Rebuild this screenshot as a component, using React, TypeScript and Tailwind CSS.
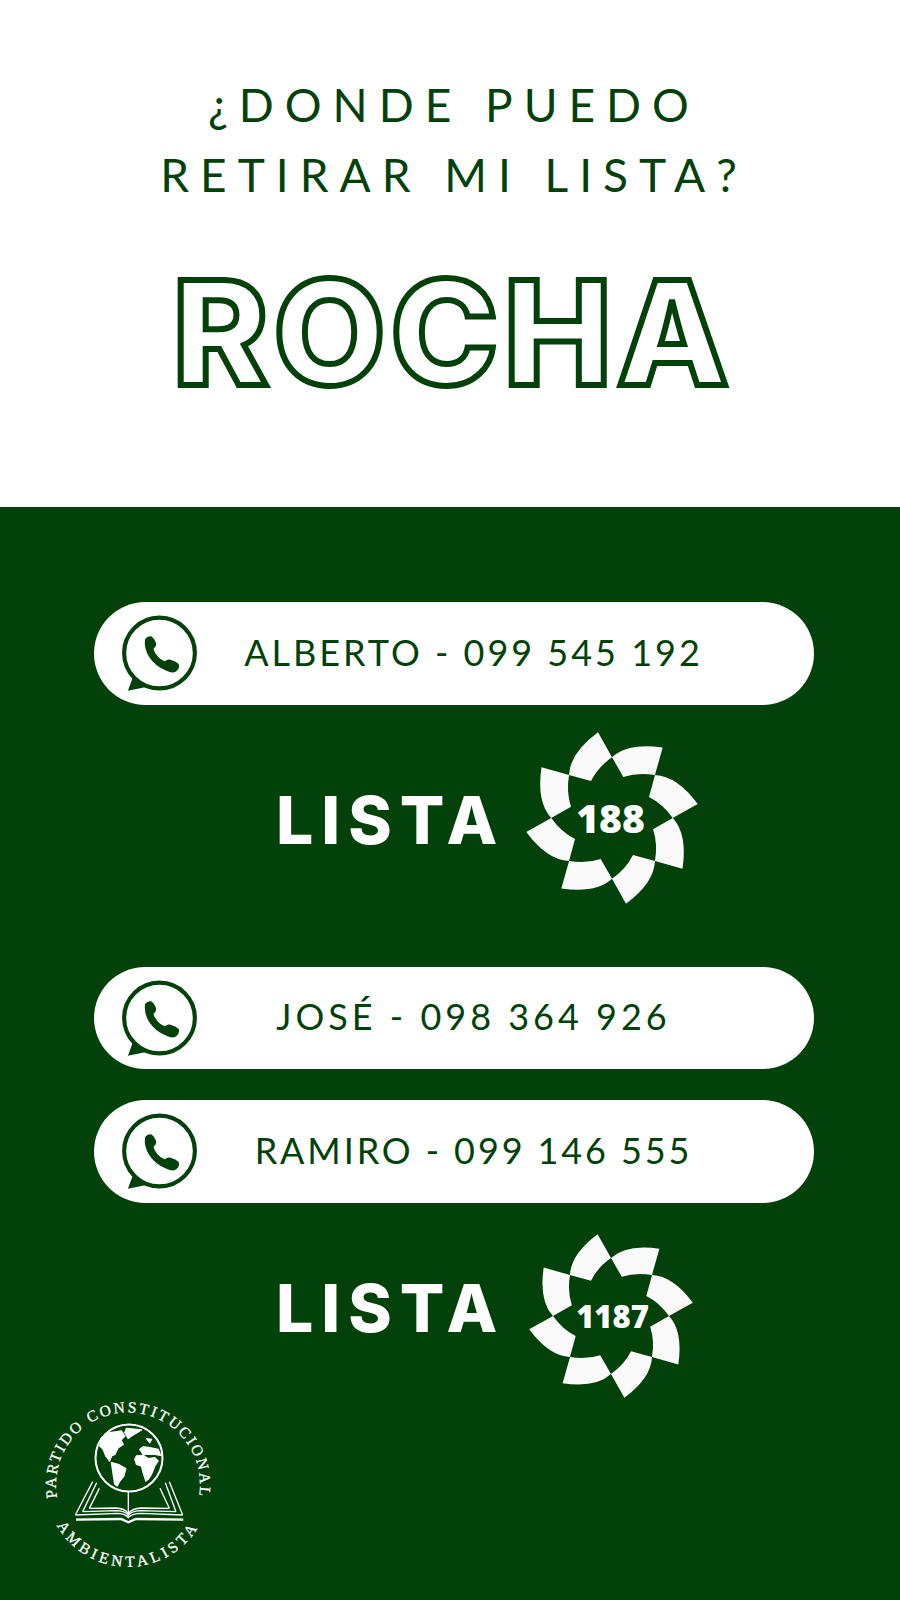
const GREEN = '#02420a'

function WhatsApp() {
  return (
    <svg viewBox="15 10 230 235" className="w-[79px] h-[81px] shrink-0" fill="none">
      <circle cx="130" cy="126" r="103" stroke={GREEN} strokeWidth="12" />
      <path d="M52 198 L38 236 L88 226 Z" fill={GREEN} />
      <path d="M88 85 Q97 74 107 78 Q116 84 120 97 Q122 106 113 113 Q112 120 124 135 Q135 148 146 150 Q153 143 162 146 Q178 150 186 158 Q190 170 178 180 Q168 186 150 178 Q118 166 100 138 Q84 112 88 85Z" fill={GREEN} />
    </svg>
  )
}

function Pill({ text, className, tracking }: { text: string; className?: string; tracking: string }) {
  return (
    <div className={`ml-[94px] w-[720px] rounded-full bg-white flex items-center ${className ?? ''}`}>
      <div className="ml-[26px]">
        <WhatsApp />
      </div>
      <p className={`flex-1 pr-[66px] pb-[4px] text-center whitespace-nowrap font-['Lato',sans-serif] font-normal text-[36px] leading-none text-[#02420a] ${tracking}`}>
        {text}
      </p>
    </div>
  )
}

function Flower({ number, numberSize, className }: { number: string; numberSize: string; className?: string }) {
  const angles = [0, 45, 90, 135, 180, 225, 270, 315]
  return (
    <div className={`relative flex items-center justify-center ${className ?? ''}`}>
      <svg viewBox="-88 -88 176 176" className="absolute inset-0 w-full h-full" fill="#fafafa">
        {angles.map((a) => (
          <path
            key={a}
            transform={`rotate(${a})`}
            d="M-43 -43 Q-42 -65 -14 -85.7 L0 -60.7 Q-14 -51 -21 -37 Z"
          />
        ))}
      </svg>
      <span className={`relative font-['Open_Sans',sans-serif] font-extrabold leading-none text-white ${numberSize}`}>
        {number}
      </span>
    </div>
  )
}

function ListaRow({ textClass, children, className }: { textClass: string; children: React.ReactNode; className?: string }) {
  return (
    <div className={`flex items-center h-[176px] ${className ?? ''}`}>
      <p className={`ml-[276px] w-[248px] font-['Inter',sans-serif] font-extrabold text-[66px] leading-none tracking-[8px] text-white ${textClass}`}>
        LISTA
      </p>
      {children}
    </div>
  )
}

function PartyLogo() {
  return (
    <svg viewBox="0 0 200 180" className="w-[200px] h-[180px]" fill="none">
      <defs>
        <path id="arc-top" d="M43 141 A72 72 0 1 1 153 141" />
        <path id="arc-bottom" d="M21 123 A82 82 0 0 0 175 123" />
      </defs>
      <text fill="#fff" fontFamily="'Liberation Serif', serif" fontSize="15.5" letterSpacing="2.2" stroke="#fff" strokeWidth=".3" textAnchor="middle">
        <textPath href="#arc-top" startOffset="50%">PARTIDO CONSTITUCIONAL</textPath>
      </text>
      <text fill="#fff" fontFamily="'Liberation Serif', serif" fontSize="15.5" letterSpacing="3.8" stroke="#fff" strokeWidth=".3" textAnchor="middle">
        <textPath href="#arc-bottom" startOffset="50%">AMBIENTALISTA</textPath>
      </text>
      {/* globe */}
      <circle cx="99" cy="68" r="33.5" stroke="#fff" strokeWidth="2" />
      <g transform="translate(56.5 26) scale(.3333)" fill="#fff" stroke="#fff" strokeWidth="4" strokeLinejoin="round">
        <path d="M70 50 L105 45 L115 60 L103 72 L110 85 L95 95 L85 115 L75 120 L70 135 L58 120 L50 100 L40 90 L45 65 Z" />
        <path d="M120 37 L165 42 L135 60 L125 67 L115 50 Z" />
        <path d="M75 140 L95 145 L118 158 L112 180 L100 195 L92 210 L85 205 L80 175 Z" />
        <path d="M150 120 L170 118 L185 128 L205 125 L215 135 L205 150 L195 175 L185 190 L178 195 L170 170 L165 150 L150 145 L145 130 Z" />
        <path d="M160 100 L170 92 L190 95 L215 100 L222 118 L205 115 L170 115 Z" />
        <path d="M180 68 L195 70 L190 80 Z" />
      </g>
      {/* book */}
      <g transform="translate(36 90) scale(.3333)" stroke="#fff" strokeWidth="4">
        <path d="M187 35 V115" />
        <path d="M28 105 L80 5 M350 105 L310 5" />
        <path d="M50 95 L92 8 M330 95 L298 8" />
        <path d="M70 85 L100 25 M310 85 L282 25" />
        <path d="M28 105 L155 100 Q175 100 187 112 Q200 100 225 100 L350 105" />
        <path d="M50 95 L150 92 Q175 92 187 105 Q200 92 225 92 L330 95" />
        <path d="M70 85 L150 84 Q175 85 187 100 Q200 85 225 84 L310 85" />
        <path d="M30 119 L165 117 L187 127 L210 117 L352 119" strokeWidth="7" />
      </g>
    </svg>
  )
}

export default function App() {
  return (
    <div className="w-[900px] min-h-[1600px] bg-[#02420a]">
      <section className="h-[507px] bg-white flex flex-col items-center">
        <h1 className="mt-[70px] pl-[8px] text-center font-['Lato',sans-serif] font-normal text-[46px] leading-[70px] tracking-[11px] text-[#02420a] whitespace-nowrap">
          ¿DONDE PUEDO
          <br />
          RETIRAR MI LISTA?
        </h1>
        <p className="mt-[53px] pl-[6px] font-['Inter',sans-serif] font-extrabold text-[145px] leading-[140px] tracking-[5px] text-white [-webkit-text-stroke:6px_#02420a] whitespace-nowrap">
          ROCHA
        </p>
      </section>

      <section className="pt-[95px]">
        <Pill text="ALBERTO - 099 545 192" tracking="tracking-[3px]" className="h-[103px]" />
        <ListaRow textClass="pt-[4px]" className="mt-[25px]">
          <Flower number="188" numberSize="text-[39px] pb-[2px] pr-[3px]" className="w-[176px] h-[176px]" />
        </ListaRow>
        <Pill text="JOSÉ - 098 364 926" tracking="tracking-[4px]" className="h-[102px] mt-[61px]" />
        <Pill text="RAMIRO - 099 146 555" tracking="tracking-[2.9px]" className="h-[103px] mt-[31px]" />
        <ListaRow textClass="pb-[16px]" className="mt-[25px]">
          <Flower number="1187" numberSize="text-[31px] pl-[3px]" className="w-[168px] h-[168px] ml-[3px]" />
        </ListaRow>
        <div className="ml-[30px] -mt-[14px]">
          <PartyLogo />
        </div>
      </section>
    </div>
  )
}
